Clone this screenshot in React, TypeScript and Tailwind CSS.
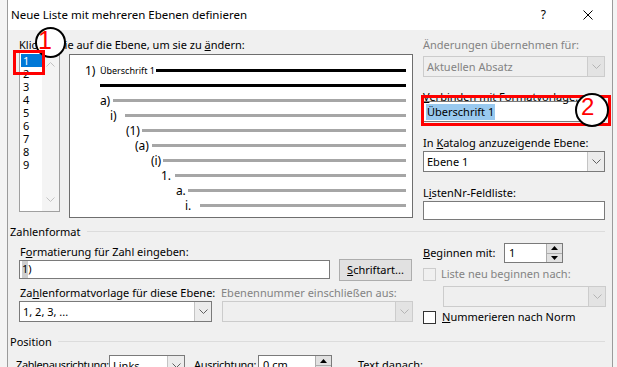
import React from 'react';

const Chevron = ({ disabled = false }: { disabled?: boolean }) => (
  <svg width="9" height="5" viewBox="0 0 9 5">
    <path d="M0.5 0.5 L4.5 4.5 L8.5 0.5" fill="none" stroke={disabled ? '#b4b4b4' : '#606060'} strokeWidth="1" />
  </svg>
);

const Select = ({ value, className = '', disabled = false }: { value?: string; className?: string; disabled?: boolean }) => (
  <div
    className={`flex h-[21px] border ${disabled ? 'border-[#cccccc] bg-[#efefef] text-[#838383]' : 'border-[#7a7a7a] bg-white text-black'} ${className}`}
  >
    <div className="flex-1 truncate px-[3px] leading-[19px]">{value}</div>
    <div
      className={`flex w-[17px] items-center justify-center border-l ${disabled ? 'border-[#cccccc] bg-[#e3e3e3]' : 'border-[#c4c4c4] bg-[#ececec]'}`}
    >
      <Chevron disabled={disabled} />
    </div>
  </div>
);

const Spinner = ({ value, className = '' }: { value: string; className?: string }) => (
  <div className={`flex h-[20px] border border-[#7a7a7a] bg-white ${className}`}>
    <div className="flex-1 pl-[4px] leading-[18px]">{value}</div>
    <div className="flex w-[16px] flex-col border-l border-[#adadad]">
      <div className="flex flex-1 items-center justify-center border-b border-[#adadad] bg-[#e1e1e1]">
        <svg width="7" height="4" viewBox="0 0 7 4">
          <path d="M0 4 L3.5 0 L7 4Z" fill="#000" />
        </svg>
      </div>
      <div className="flex flex-1 items-center justify-center bg-[#e1e1e1]">
        <svg width="7" height="4" viewBox="0 0 7 4">
          <path d="M0 0 L3.5 4 L7 0Z" fill="#000" />
        </svg>
      </div>
    </div>
  </div>
);

const Label = ({ children, className = '' }: { children: React.ReactNode; className?: string }) => (
  <div className={`h-[15px] whitespace-nowrap leading-[15px] ${className}`}>{children}</div>
);

const SectionHeading = ({ title }: { title: string }) => (
  <div className="flex h-[15px] items-center pl-[2px] pr-[7px]">
    <span className="whitespace-nowrap leading-[15px]">{title}</span>
    <div className="ml-[6px] h-px flex-1 bg-[#dcdcdc]" />
  </div>
);

const previewRows = [
  { pl: 15, labels: [{ text: '1)', w: 15 }, { text: 'Überschrift 1', w: 56, small: true }], dark: true },
  { pl: 30, labels: [], dark: true },
  { pl: 30, labels: [{ text: 'a)', w: 13 }] },
  { pl: 40, labels: [{ text: 'i)', w: 15 }] },
  { pl: 56, labels: [{ text: '(1)', w: 16 }] },
  { pl: 65, labels: [{ text: '(a)', w: 17 }] },
  { pl: 81, labels: [{ text: '(i)', w: 12 }] },
  { pl: 91, labels: [{ text: '1.', w: 14 }] },
  { pl: 106, labels: [{ text: 'a.', w: 12 }] },
  { pl: 115, labels: [{ text: 'i.', w: 15 }] },
];

const Preview = () => (
  <div className="mt-[2px] h-[164px] w-[345px] border border-[#6e6e6e] bg-white pt-[8px] pr-[6px]">
    {previewRows.map((row, i) => (
      <div key={i} className="flex h-[15px] items-center" style={{ paddingLeft: row.pl }}>
        {row.labels.map((l, j) => (
          <span
            key={j}
            className={`shrink-0 whitespace-nowrap ${l.small ? 'text-[9px]' : 'text-[12px]'}`}
            style={{ width: l.w }}
          >
            {l.text}
          </span>
        ))}
        <div className={`h-[3px] flex-1 ${row.dark ? 'bg-black' : 'bg-[#a6a6a6]'}`} />
      </div>
    ))}
  </div>
);

const LevelList = () => (
  <div className="flex h-[160px] w-[41px] border border-[#a0a0a0] bg-white">
    <div className="flex-1 pt-[1px] pl-px">
      {[1, 2, 3, 4, 5, 6, 7, 8, 9].map((n) => (
        <div
          key={n}
          className={`h-[13px] pl-[2px] leading-[13px] ${n === 1 ? 'bg-[#0078d7] text-white' : ''}`}
        >
          {n}
        </div>
      ))}
    </div>
    <div className="flex w-[17px] flex-col items-center justify-between bg-[#f4f4f4] py-[9px]">
      <svg width="9" height="5" viewBox="0 0 9 5">
        <path d="M0.5 4.5 L4.5 0.5 L8.5 4.5" fill="none" stroke="#c2c2c2" />
      </svg>
      <svg width="9" height="5" viewBox="0 0 9 5">
        <path d="M0.5 0.5 L4.5 4.5 L8.5 0.5" fill="none" stroke="#c2c2c2" />
      </svg>
    </div>
  </div>
);

const Checkbox = ({ disabled = false }: { disabled?: boolean }) => (
  <div className={`h-[13px] w-[13px] shrink-0 border ${disabled ? 'border-[#cccccc] bg-[#f0f0f0]' : 'border-[#333333] bg-white'}`} />
);

export default function App() {
  return (
    <div className="relative flex h-[367px] w-[617px] overflow-hidden bg-[#f4f4f4] font-['Noto_Sans',sans-serif] text-[11px] text-black">
      <div className="ml-[7px] flex w-[606px] shrink-0 flex-col border-x border-[#9b9b9b]">
        {/* title bar */}
        <div className="flex h-[30px] shrink-0 items-center bg-white pl-[3px]">
          <span className="text-[11.5px] whitespace-nowrap">Neue Liste mit mehreren Ebenen definieren</span>
          <span className="ml-auto text-[12px]">?</span>
          <svg className="mr-[19px] ml-[37px]" width="10" height="10" viewBox="0 0 10 10">
            <path d="M0.5 0.5 L9.5 9.5 M9.5 0.5 L0.5 9.5" stroke="#000" strokeWidth="1" />
          </svg>
        </div>

        <div className="flex-1 bg-[#f0f0f0]">
          {/* level + preview + link settings */}
          <div className="flex pt-[7px] pl-[11px]">
            <div className="w-[394px]">
              <Label>
                Klicken Sie auf die Ebene, um sie zu <span className="underline">ä</span>ndern:
              </Label>
              <div className="flex items-start gap-[9px]">
                <LevelList />
                <Preview />
              </div>
            </div>

            <div className="ml-[10px] w-[182px]">
              <Label className="text-[#838383]">Änderungen übernehmen für:</Label>
              <Select className="mt-[4px]" value="Aktuellen Absatz" disabled />
              <Label className="relative z-10 mt-[12px]">
                <span className="underline">V</span>erbinden mit Formatvorlage:
              </Label>
              <div className="-mt-[3px] flex h-[21px] items-center border border-[#7a7a7a] bg-white pl-[2px]">
                <span className="bg-[#99c9ef] px-px leading-[16px]">Überschrift 1</span>
              </div>
              <Label className="mt-[13px]">
                In <span className="underline">K</span>atalog anzuzeigende Ebene:
              </Label>
              <Select className="mt-[1px]" value="Ebene 1" />
              <Label className="mt-[13px]">
                L<span className="underline">i</span>stenNr-Feldliste:
              </Label>
              <div className="mt-[1px] h-[19px] border border-[#7a7a7a] bg-white" />
            </div>
          </div>

          {/* Zahlenformat */}
          <div className="mt-[4px]">
            <SectionHeading title="Zahlenformat" />
            <div className="flex pl-[11px]">
              <div className="w-[394px]">
                <Label className="mt-[5px] pl-px">
                  F<span className="underline">o</span>rmatierung für Zahl eingeben:
                </Label>
                <div className="flex h-[22px] items-start">
                  <div className="mt-px flex h-[19px] w-[311px] items-center border border-[#7a7a7a] bg-white pl-[2px]">
                    <span className="bg-[#cfcfcf]">1</span>
                    <span>)</span>
                  </div>
                  <div className="ml-[9px] flex h-[22px] w-[73px] items-center justify-center border border-[#adadad] bg-[#e1e1e1]">
                    <span>
                      <span className="underline">S</span>chriftart...
                    </span>
                  </div>
                </div>
                <div className="mt-[4px] flex">
                  <Label className="w-[202px] pl-px">
                    Za<span className="underline">h</span>lenformatvorlage für diese Ebene:
                  </Label>
                  <Label className="text-[#838383]">Ebenennummer einschließen aus:</Label>
                </div>
                <div className="mt-px flex">
                  <Select className="w-[193px]" value="1, 2, 3, ..." />
                  <Select className="ml-[10px] w-[191px]" disabled />
                </div>
              </div>

              <div className="ml-[10px] w-[183px]">
                <div className="mt-[4px] flex h-[20px] items-center">
                  <span className="w-[81px] shrink-0">
                    <span className="underline">B</span>eginnen mit:
                  </span>
                  <Spinner className="w-[59px]" value="1" />
                </div>
                <div className="mt-[5px] flex h-[13px] items-center">
                  <Checkbox disabled />
                  <span className="ml-[5px] whitespace-nowrap text-[#838383]">Liste neu beginnen nach:</span>
                </div>
                <Select className="mt-[5px] ml-[20px] w-[163px]" disabled />
                <div className="mt-[4px] flex h-[13px] items-center">
                  <Checkbox />
                  <span className="ml-[6px] whitespace-nowrap">
                    <span className="underline">N</span>ummerieren nach Norm
                  </span>
                </div>
              </div>
            </div>
          </div>

          {/* Position */}
          <div className="mt-[10px]">
            <SectionHeading title="Position" />
            <div className="mt-[6px] flex items-start pl-[8px]">
              <span className="w-[93px] shrink-0 whitespace-nowrap leading-[19px] tracking-[-0.4px]">Zahlenausrichtung:</span>
              <Select className="w-[76px]" value="Links" />
              <span className="ml-[9px] w-[64px] shrink-0 whitespace-nowrap leading-[19px] tracking-[-0.3px]">Ausrichtung:</span>
              <Spinner className="h-[21px] w-[74px]" value="0 cm" />
              <span className="ml-[26px] whitespace-nowrap leading-[19px]">Text danach:</span>
            </div>
          </div>
        </div>
      </div>

      {/* annotations */}
      <div className="absolute top-[27px] left-[35px] z-20 h-[31px] w-[31px] rounded-full border-2 border-black bg-white" />
      <span className="absolute top-[28px] left-[38px] z-20 font-['Liberation_Sans',sans-serif] text-[25px] leading-[25px] text-[#ff0000]">
        1
      </span>
      <div className="absolute top-[50px] left-[13px] z-20 h-[25px] w-[32px] border-[3px] border-[#ff0000]" />

      <div className="absolute top-[95px] left-[421px] z-20 h-[31px] w-[190px] border-[3px] border-[#ff0000]" />
      <div className="absolute top-[93px] left-[575px] z-20 h-[34px] w-[34px] rounded-full border-2 border-black bg-white" />
      <span className="absolute top-[95px] left-[581px] z-20 font-['Liberation_Sans',sans-serif] text-[24px] leading-[24px] text-[#ff0000]">
        2
      </span>
    </div>
  );
}
